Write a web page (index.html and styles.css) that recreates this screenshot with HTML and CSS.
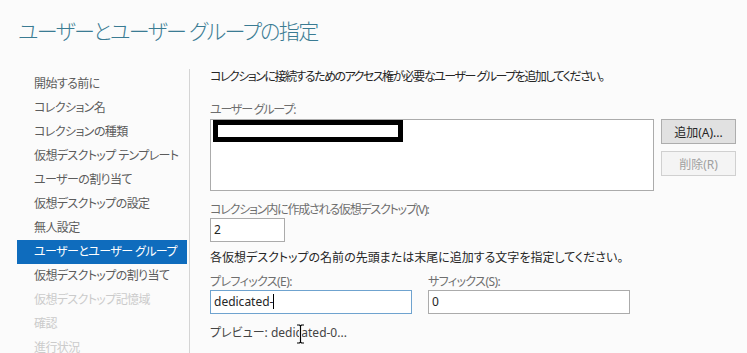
FILE: index.html
```html
<!DOCTYPE html>
<html lang="ja">
<head>
  <meta charset="UTF-8">
  <title>ユーザーとユーザー グループの指定</title>
  <link rel="stylesheet" href="styles.css">
</head>
<body>

  <div class="header">
    <h1>ユーザーとユーザー グループの指定</h1>
  </div>

  <div class="main">
    <div class="sidebar">
      <div class="step">開始する前に</div>
      <div class="step">コレクション名</div>
      <div class="step">コレクションの種類</div>
      <div class="step">仮想デスクトップ テンプレート</div>
      <div class="step">ユーザーの割り当て</div>
      <div class="step">仮想デスクトップの設定</div>
      <div class="step">無人設定</div>
      <div class="step active">ユーザーとユーザー グループ</div>
      <div class="step">仮想デスクトップの割り当て</div>
      <div class="step disabled">仮想デスクトップ記憶域</div>
      <div class="step disabled">確認</div>
      <div class="step disabled">進行状況</div>
    </div>

    <div class="content">
      <p class="desc">コレクションに接続するためのアクセス権が必要なユーザー グループを追加してください。</p>

      <label class="label first">ユーザー グループ:</label>
      <div class="group-row">
        <div class="listbox">
          <div class="redact"></div>
        </div>
        <div class="buttons">
          <button class="btn">追加(A)...</button>
          <button class="btn" disabled>削除(R)</button>
        </div>
      </div>

      <label class="label count">コレクション内に作成される仮想デスクトップ(V):</label>
      <div class="field small">2</div>

      <p class="desc second">各仮想デスクトップの名前の先頭または末尾に追加する文字を指定してください。</p>

      <div class="name-row">
        <div class="name-col">
          <label class="label">プレフィックス(E):</label>
          <div class="field wide focus">dedicated-<span class="caret"></span></div>
        </div>
        <div class="name-col">
          <label class="label">サフィックス(S):</label>
          <div class="field wide">0</div>
        </div>
      </div>

      <p class="preview">プレビュー: dedicated-0...</p>
    </div>
  </div>

  <svg class="cursor" width="9" height="20" viewBox="0 0 9 20">
    <path d="M1 1h2.5l1 1 1-1H8M4.5 2v16M1 19h2.5l1-1 1 1H8" fill="none" stroke="#fff" stroke-width="3"/>
    <path d="M1 1h2.5l1 1 1-1H8M4.5 2v16M1 19h2.5l1-1 1 1H8" fill="none" stroke="#000" stroke-width="1.2"/>
  </svg>

</body>
</html>
```

FILE: styles.css
```css
body {
  font-family: "Noto Sans", "Noto Sans CJK JP", sans-serif;
  font-feature-settings: "palt";
  font-size: 12px;
  line-height: 16px;
  background-color: #fbfbfb;
  color: #262626;
  margin: 0;
  padding: 0;
  position: relative;
  width: 747px;
  height: 353px;
  overflow: hidden;
}

.header {
  height: 69px;
  padding-left: 18px;
  box-sizing: border-box;
}

h1 {
  margin: 0;
  padding-top: 16px;
  font-size: 21px;
  line-height: 30px;
  font-weight: 300;
  letter-spacing: -1.6px;
  color: #3a7b93;
}

.main {
  display: grid;
  grid-template-columns: 190px 1fr;
}

.sidebar {
  border-right: 1px solid #d4d4d4;
  padding: 3px 2px 0 17px;
  height: 290px;
}

.step {
  height: 24px;
  line-height: 24px;
  padding-left: 17px;
  color: #5c5c5c;
  letter-spacing: -0.6px;
  white-space: nowrap;
}

.step.active {
  background-color: #0f6cbd;
  color: #ffffff;
}

.step.disabled {
  color: #cbcbcb;
}

.content {
  padding-left: 20px;
}

.desc {
  margin: 0;
  letter-spacing: -1.5px;
}

.desc.second {
  margin-top: 8px;
  letter-spacing: 0;
}

.label {
  display: block;
  color: #6e6e6e;
  letter-spacing: -0.6px;
}

.label.first {
  margin-top: 17px;
  margin-bottom: 1px;
  letter-spacing: -1.2px;
}

.label.count {
  margin-top: 11px;
  letter-spacing: -1.2px;
}

.group-row {
  display: flex;
  gap: 7px;
}

.listbox {
  width: 444px;
  height: 72px;
  box-sizing: border-box;
  border: 1px solid #ababab;
  background-color: #ffffff;
  padding: 0 0 0 2px;
}

.redact {
  width: 190px;
  height: 22px;
  box-sizing: border-box;
  border: 5px solid #000000;
  background-color: #ffffff;
}

.buttons {
  display: flex;
  flex-direction: column;
  gap: 7px;
}

.btn {
  width: 75px;
  height: 25px;
  padding: 0;
  font-family: inherit;
  font-feature-settings: "palt";
  font-size: 12px;
  color: #262626;
  background-color: #e1e1e1;
  border: 1px solid #adadad;
}

.btn:disabled {
  color: #a0a0a0;
  background-color: #f4f4f4;
  border-color: #d0d0d0;
}

.field {
  height: 24px;
  box-sizing: border-box;
  border: 1px solid #ababab;
  background-color: #ffffff;
  padding: 0 3px;
  line-height: 22px;
  color: #262626;
}

.field.small {
  width: 75px;
}

.field.wide {
  width: 202px;
}

.field.focus {
  border-color: #6fa3cf;
}

.caret {
  display: inline-block;
  width: 1px;
  height: 15px;
  background-color: #000000;
  vertical-align: -3px;
}

.name-row {
  display: flex;
  gap: 16px;
  margin-top: 8px;
}

.preview {
  margin: 11px 0 0;
  color: #444444;
}

.cursor {
  position: absolute;
  left: 296px;
  top: 324px;
}
```
